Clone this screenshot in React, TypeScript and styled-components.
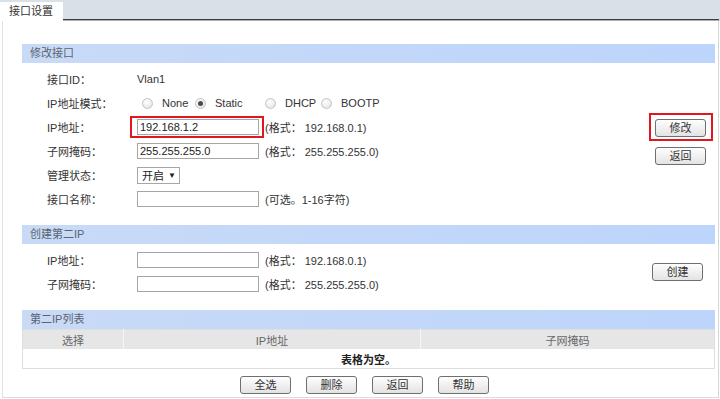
import React from 'react';
import styled, { createGlobalStyle } from 'styled-components';

const GlobalStyle = createGlobalStyle`
  body {
    margin: 0;
    background: #fff;
    font-family: "Liberation Sans", "Noto Sans CJK SC", sans-serif;
    font-size: 11px;
    color: #333;
  }
`;

const Page = styled.div`
  width: 720px;
  height: 399px;
  overflow: hidden;
`;

const TabBar = styled.div`
  display: flex;
  height: 21px;
  background: #dae0e8;
`;

const Tab = styled.div`
  width: 54px;
  margin-top: 2px;
  padding-left: 9px;
  line-height: 18px;
  background: #fff;
  color: #333;
  font-size: 11px;
`;

const TabRule = styled.div`
  flex: 1;
  align-self: flex-end;
  height: 1px;
  margin-right: 1px;
  background: #3b3f44;
  border-bottom: 1px solid #a9aeb5;
`;

const Panel = styled.div`
  height: 353px;
  margin: 0 1px 0 2px;
  padding: 23px 3px 0 19px;
  border-left: 1px solid #e2e2e2;
  border-right: 1px solid #d6d6d6;
  border-bottom: 1px solid #dcdcdc;
`;

const Section = styled.section`
  margin-bottom: 12px;
`;

const SectionHead = styled.div`
  height: 19px;
  line-height: 19px;
  padding-left: 8px;
  background: linear-gradient(to right, #c8daf6, #bdd5fb);
  color: #5a6470;
`;

const SectionBody = styled.div`
  display: flex;
  align-items: center;
  padding: 4px 0 2px;
`;

const Form = styled.div`
  flex: 1;
`;

const Row = styled.div`
  display: flex;
  align-items: center;
  height: 24px;
  white-space: nowrap;
`;

const Label = styled.span`
  width: 90px;
  padding-left: 25px;
  flex-shrink: 0;
`;

const Value = styled.span`
  color: #333;
`;

const TextInput = styled.div`
  width: 116px;
  height: 14px;
  line-height: 14px;
  padding: 0 2px;
  border: 1px solid #a6a6a6;
  background: #fff;
  color: #222;
`;

const Highlight = styled.span`
  display: inline-flex;
  margin: -3px -5px -3px -7px;
  padding: 1px 3px 1px 5px;
  border: 2px solid #e1161e;
`;

const Hint = styled.span`
  margin-left: 6px;
  color: #333;
`;

const RadioGroup = styled.div`
  display: flex;
  align-items: center;
  margin-left: 5px;
`;

const RadioOption = styled.label<{ $w?: number }>`
  display: flex;
  align-items: center;
  width: ${p => (p.$w ? `${p.$w}px` : 'auto')};
`;

const RadioDot = styled.span<{ $on?: boolean }>`
  position: relative;
  width: 9px;
  height: 9px;
  margin-right: 9px;
  border: 1px solid #c4c4c4;
  border-radius: 50%;
  background: radial-gradient(circle at 40% 35%, #fff, #dedede);
  &::after {
    content: '';
    display: ${p => (p.$on ? 'block' : 'none')};
    position: absolute;
    left: 2px;
    top: 2px;
    width: 5px;
    height: 5px;
    border-radius: 50%;
    background: #4a4a4a;
  }
`;

const Select = styled.div`
  display: flex;
  align-items: center;
  justify-content: space-between;
  width: 34px;
  height: 15px;
  padding: 0 3px 0 4px;
  border: 1px solid #a6a6a6;
  color: #222;
`;

const Caret = styled.span`
  font-size: 8px;
`;

const Side = styled.div<{ $right: number }>`
  display: flex;
  flex-direction: column;
  align-items: flex-end;
  gap: 6px;
  padding-right: ${p => p.$right}px;
`;

const ButtonBox = styled.span`
  display: inline-flex;
  margin-right: -7px;
  padding: 4px 5px 2px 4px;
  border: 2px solid #e1161e;
`;

const Button = styled.button`
  width: 51px;
  height: 18px;
  padding: 0;
  border: 1px solid #6f6f6f;
  border-radius: 3px;
  background: linear-gradient(#fefefe, #e3e3e3);
  font-family: inherit;
  font-size: 11px;
  color: #333;
  line-height: 16px;
`;

const Table = styled.table`
  width: 100%;
  border-collapse: collapse;
  border: 1px solid #dedede;
  table-layout: fixed;
`;

const Th = styled.th<{ $w?: number }>`
  width: ${p => (p.$w ? `${p.$w}px` : 'auto')};
  height: 19px;
  padding: 0;
  background: #e6e6e6;
  border-left: 1px solid #f6f6f6;
  font-weight: normal;
  color: #666;
  &:first-child {
    border-left: none;
  }
`;

const EmptyCell = styled.td`
  height: 19px;
  padding: 0;
  text-align: center;
  font-weight: bold;
  color: #222;
`;

const Footer = styled.div`
  display: flex;
  justify-content: center;
  gap: 15px;
  margin-top: 7px;
  padding-right: 8px;
`;

export default function App() {
  return (
    <Page>
      <GlobalStyle />
      <TabBar>
        <Tab>接口设置</Tab>
        <TabRule />
      </TabBar>
      <Panel>
        <Section>
          <SectionHead>修改接口</SectionHead>
          <SectionBody>
            <Form>
              <Row>
                <Label>接口ID：</Label>
                <Value>Vlan1</Value>
              </Row>
              <Row>
                <Label>IP地址模式：</Label>
                <RadioGroup>
                  <RadioOption $w={53}><RadioDot />None</RadioOption>
                  <RadioOption $w={70}><RadioDot $on />Static</RadioOption>
                  <RadioOption $w={56}><RadioDot />DHCP</RadioOption>
                  <RadioOption><RadioDot />BOOTP</RadioOption>
                </RadioGroup>
              </Row>
              <Row>
                <Label>IP地址：</Label>
                <Highlight>
                  <TextInput>192.168.1.2</TextInput>
                </Highlight>
                <Hint>(格式： 192.168.0.1)</Hint>
              </Row>
              <Row>
                <Label>子网掩码：</Label>
                <TextInput>255.255.255.0</TextInput>
                <Hint>(格式： 255.255.255.0)</Hint>
              </Row>
              <Row>
                <Label>管理状态：</Label>
                <Select>开启<Caret>▼</Caret></Select>
              </Row>
              <Row>
                <Label>接口名称：</Label>
                <TextInput />
                <Hint>(可选。1-16字符)</Hint>
              </Row>
            </Form>
            <Side $right={9}>
              <ButtonBox>
                <Button>修改</Button>
              </ButtonBox>
              <Button>返回</Button>
            </Side>
          </SectionBody>
        </Section>

        <Section>
          <SectionHead>创建第二IP</SectionHead>
          <SectionBody>
            <Form>
              <Row>
                <Label>IP地址：</Label>
                <TextInput />
                <Hint>(格式： 192.168.0.1)</Hint>
              </Row>
              <Row>
                <Label>子网掩码：</Label>
                <TextInput />
                <Hint>(格式： 255.255.255.0)</Hint>
              </Row>
            </Form>
            <Side $right={12}>
              <Button>创建</Button>
            </Side>
          </SectionBody>
        </Section>

        <section>
          <SectionHead>第二IP列表</SectionHead>
          <Table>
            <thead>
              <tr>
                <Th $w={100}>选择</Th>
                <Th $w={296}>IP地址</Th>
                <Th>子网掩码</Th>
              </tr>
            </thead>
            <tbody>
              <tr>
                <EmptyCell colSpan={3}>表格为空。</EmptyCell>
              </tr>
            </tbody>
          </Table>
          <Footer>
            <Button>全选</Button>
            <Button>删除</Button>
            <Button>返回</Button>
            <Button>帮助</Button>
          </Footer>
        </section>
      </Panel>
    </Page>
  );
}
